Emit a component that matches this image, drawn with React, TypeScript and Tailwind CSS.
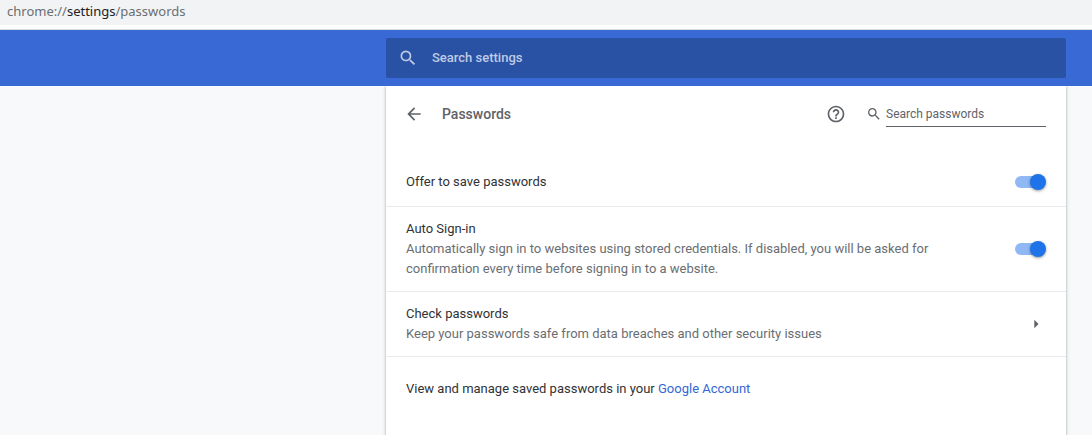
import { ReactNode } from "react";
import { MdArrowBack, MdArrowRight, MdHelpOutline, MdSearch } from "react-icons/md";

type ToggleProps = {
    id: string;
    label: string;
    description?: string;
};

function Toggle({ id, label, description }: ToggleProps) {
    return (
        <div className="flex min-h-[49px] items-center justify-between gap-16 px-5 py-3">
            <label htmlFor={id} className="leading-5">
                <span className="block">{label}</span>
                {description && <span className="block text-[#6a6e73]">{description}</span>}
            </label>
            <input
                id={id}
                type="checkbox"
                role="switch"
                defaultChecked
                className="relative mr-[3px] h-3 w-7 shrink-0 cursor-pointer appearance-none rounded-full bg-[#bdc1c6] checked:bg-[#8fb8f4] after:absolute after:-top-0.5 after:-left-[3px] after:size-4 after:rounded-full after:bg-white after:shadow-[0_1px_3px_rgba(0,0,0,0.4)] checked:after:-right-[3px] checked:after:left-auto checked:after:bg-[#1f73e8]"
            />
        </div>
    );
}

function Column({ className, children }: { className?: string; children: ReactNode }) {
    return (
        <div className="flex-1 pr-[26px] pl-[386px]">
            <div className={className}>{children}</div>
        </div>
    );
}

export default function App() {
    return (
        <div className="flex min-h-screen flex-col bg-[#f8f9fa] font-[Roboto,sans-serif] text-[13px] text-[#303236]">
            {/* Address bar */}
            <div className="border-b border-[#dadce0] bg-white pb-1">
                <div className="bg-[#f1f3f4] px-[7px] pt-px pb-1 font-['Noto_Sans',sans-serif] text-[13px] leading-5 text-[#6b6e72]">
                    chrome://<span className="text-[#202124]">settings</span>/passwords
                </div>
            </div>

            {/* Toolbar */}
            <header className="flex bg-[#3869d4] py-2">
                <Column className="flex h-10 items-center gap-3.5 rounded-xs bg-[#2a52a4] px-3 text-[#bfcbe4]">
                    <MdSearch className="size-5 shrink-0" />
                    <input
                        type="text"
                        aria-label="Search settings"
                        placeholder="Search settings"
                        className="min-w-0 flex-1 bg-transparent font-medium outline-none placeholder:text-[#bfcbe4]"
                    />
                </Column>
            </header>

            <main className="flex flex-1">
                <Column className="h-full bg-white shadow-[0_1px_2px_rgba(60,64,67,0.3),0_1px_3px_1px_rgba(60,64,67,0.15)] [clip-path:inset(0_-8px)]">
                    <div className="flex h-14 items-center px-5 text-[#5f6368]">
                        <button type="button" aria-label="Back" className="-ml-0.5">
                            <MdArrowBack className="size-5" />
                        </button>
                        <h1 className="ml-[18px] flex-1 text-sm font-medium">Passwords</h1>
                        <a href="#help" aria-label="Help" className="mr-5">
                            <MdHelpOutline className="size-5" />
                        </a>
                        <MdSearch className="mr-1 size-4" />
                        <input
                            type="text"
                            aria-label="Search passwords"
                            placeholder="Search passwords"
                            className="h-[26px] w-40 border-b border-[#5f6368] text-xs outline-none placeholder:text-[#5f6368]"
                        />
                    </div>

                    <div className="divide-y divide-[#e8eaed] pt-4">
                        <Toggle id="offer-save" label="Offer to save passwords" />
                        <Toggle
                            id="auto-signin"
                            label="Auto Sign-in"
                            description="Automatically sign in to websites using stored credentials. If disabled, you will be asked for confirmation every time before signing in to a website."
                        />
                        <button type="button" className="flex w-full items-center justify-between px-5 py-3 text-left">
                            <span className="leading-5">
                                <span className="block">Check passwords</span>
                                <span className="block text-[#6a6e73]">
                                    Keep your passwords safe from data breaches and other security issues
                                </span>
                            </span>
                            <MdArrowRight className="size-5 text-[#5f6368]" />
                        </button>
                        <p className="px-5 pt-[22px] pb-6 leading-5">
                            View and manage saved passwords in your{" "}
                            <a href="#account" className="text-[#3367d6]">
                                Google Account
                            </a>
                        </p>
                    </div>
                </Column>
            </main>
        </div>
    );
}
